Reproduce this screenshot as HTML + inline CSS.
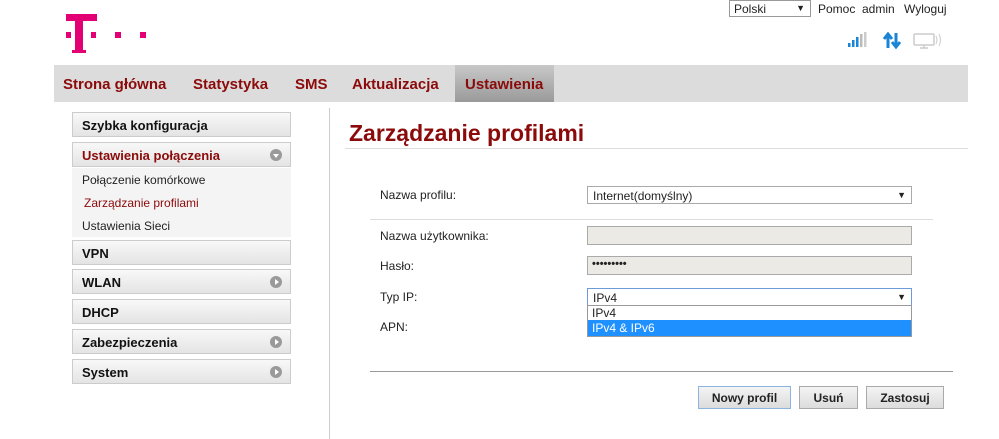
<!DOCTYPE html>
<html><head><meta charset="utf-8"><style>
*{margin:0;padding:0;box-sizing:border-box}
body{width:999px;height:439px;background:#fff;font-family:"Liberation Sans",Arial,sans-serif;position:relative;overflow:hidden;font-size:12px;color:#222}
.a{position:absolute}
.m{background:#e20074;position:absolute}
.nav{left:54px;top:65px;width:914px;height:37px;background:#dcdcdc}
.nt{position:absolute;top:11px;font-size:15px;font-weight:bold;color:#8b0a0a}
.act{left:455px;top:65px;width:99px;height:37px;background:linear-gradient(#c8c8c8,#9a9a9a)}
.sb{position:absolute;left:72px;width:219px;height:25px;border:1px solid #ccc;background:linear-gradient(#f8f8f8,#e4e4e4);font-weight:bold;font-size:13px;padding:5px 0 0 9px;color:#111}
.ic{position:absolute;right:8px;top:6px;width:12px;height:12px;border-radius:50%;background:#9a9a9a}
.ic:after{content:"";position:absolute;left:5px;top:3px;border-left:4px solid #fff;border-top:3px solid transparent;border-bottom:3px solid transparent}
.ic.d:after{left:3px;top:5px;border-top:4px solid #fff;border-left:3px solid transparent;border-right:3px solid transparent;border-bottom:0}
.sub{position:absolute;left:82px;font-size:12px;color:#222}
.lb{position:absolute;left:380px;font-size:12px;color:#222}
.in{position:absolute;left:587px;width:325px;height:19px;border:1px solid #aaa;background:#ebeae4}
.sel{position:absolute;left:587px;width:325px;height:18px;border:1px solid #aaa;background:#fff;font-size:12px;padding:2px 5px}
.sel:after{content:"▼";position:absolute;right:5px;top:3px;font-size:9px}
.btn{position:absolute;top:386px;height:23px;border:1px solid #aaa;background:linear-gradient(#f4f4f4,#dcdcdc);font-weight:bold;font-size:12px;text-align:center;padding-top:4px}
</style></head><body>
<div class="m" style="left:66px;top:14px;width:31px;height:7px"></div>
<div class="m" style="left:75px;top:14px;width:8px;height:39px"></div>
<div class="m" style="left:72px;top:50px;width:14px;height:3px"></div>
<div class="m" style="left:66px;top:32px;width:5px;height:6px"></div>
<div class="m" style="left:91px;top:32px;width:5px;height:6px"></div>
<div class="m" style="left:115px;top:32px;width:6px;height:6px"></div>
<div class="m" style="left:140px;top:32px;width:6px;height:6px"></div>

<div class="a" style="left:729px;top:0;width:82px;height:17px;border:1px solid #999;font-size:12px;padding:1px 4px">Polski<span style="position:absolute;right:5px;top:2px;font-size:9px">▼</span></div>
<div class="a" style="left:818px;top:2px;font-size:12px">Pomoc</div>
<div class="a" style="left:862px;top:2px;font-size:12px">admin</div>
<div class="a" style="left:904px;top:2px;font-size:12px">Wyloguj</div>

<svg class="a" style="left:846px;top:32px" width="100" height="20">
<rect x="2" y="11" width="2.5" height="4" fill="#1a85d6"/><rect x="6" y="8" width="2.5" height="7" fill="#1a85d6"/><rect x="10" y="5" width="2.5" height="10" fill="#1a85d6"/><rect x="14" y="2" width="2.5" height="13" fill="#bbb"/><rect x="18" y="0" width="2.5" height="15" fill="#ccc"/>
<path d="M42 16V3M38 7l4-5 4 5" stroke="#1a85d6" stroke-width="3" fill="none"/>
<path d="M50 1v13M46 10l4 5 4-5" stroke="#1a85d6" stroke-width="3" fill="none"/>
<rect x="68" y="2" width="20" height="11" rx="1" fill="none" stroke="#ccc" stroke-width="1.5"/><path d="M74 16h8M78 13v3" stroke="#ccc" stroke-width="1.5"/>
<path d="M90 4q2 4 0 8M93 2q3 6 0 12" stroke="#ccc" fill="none"/>
</svg>

<div class="a nav"></div>
<div class="a act"></div>
<div class="nt" style="left:63px;top:76px">Strona główna</div>
<div class="nt" style="left:193px;top:76px">Statystyka</div>
<div class="nt" style="left:295px;top:76px">SMS</div>
<div class="nt" style="left:352px;top:76px">Aktualizacja</div>
<div class="nt" style="left:465px;top:76px">Ustawienia</div>

<div class="sb" style="top:112px">Szybka konfiguracja</div>
<div class="sb" style="top:142px;color:#8b0a0a;font-weight:normal;font-weight:600">Ustawienia połączenia<span class="ic d"></span></div>
<div class="a" style="left:72px;top:168px;width:219px;height:69px;background:#f4f4f4"></div>
<div class="sub" style="top:173px">Połączenie komórkowe</div>
<div class="sub" style="top:196px;color:#8b0a0a;left:84px">Zarządzanie profilami</div>
<div class="sub" style="top:219px">Ustawienia Sieci</div>
<div class="sb" style="top:240px">VPN</div>
<div class="sb" style="top:269px">WLAN<span class="ic"></span></div>
<div class="sb" style="top:299px">DHCP</div>
<div class="sb" style="top:329px">Zabezpieczenia<span class="ic"></span></div>
<div class="sb" style="top:359px">System<span class="ic"></span></div>

<div class="a" style="left:329px;top:108px;width:1px;height:331px;background:#ccc"></div>
<div class="a" style="left:349px;top:120px;font-size:23px;font-weight:bold;color:#8b0a0a">Zarządzanie profilami</div>
<div class="a" style="left:345px;top:148px;width:623px;height:1px;background:#ddd"></div>

<div class="lb" style="top:188px">Nazwa profilu:</div>
<div class="sel" style="top:186px">Internet(domyślny)</div>
<div class="a" style="left:370px;top:219px;width:563px;height:1px;background:#ddd"></div>
<div class="lb" style="top:229px">Nazwa użytkownika:</div>
<div class="in" style="top:226px"></div>
<div class="lb" style="top:259px">Hasło:</div>
<div class="in" style="top:256px;font-size:11px;padding:1px 4px;font-weight:bold">•••••••••</div>
<div class="lb" style="top:290px">Typ IP:</div>
<div class="sel" style="top:288px;border-color:#6b9bd8">IPv4</div>
<div class="a" style="left:587px;top:305px;width:325px;height:32px;border:1px solid #999;background:#fff"></div>
<div class="a" style="left:592px;top:306px;font-size:12px">IPv4</div>
<div class="a" style="left:588px;top:320px;width:323px;height:16px;background:#1e90ff;color:#fff;padding:1px 4px;font-size:12px">IPv4 &amp; IPv6</div>
<div class="lb" style="top:320px">APN:</div>
<div class="a" style="left:370px;top:371px;width:583px;height:1px;background:#999"></div>

<div class="btn" style="left:698px;width:93px;border-color:#8cb4e0">Nowy profil</div>
<div class="btn" style="left:799px;width:59px">Usuń</div>
<div class="btn" style="left:866px;width:78px">Zastosuj</div>
</body></html>
